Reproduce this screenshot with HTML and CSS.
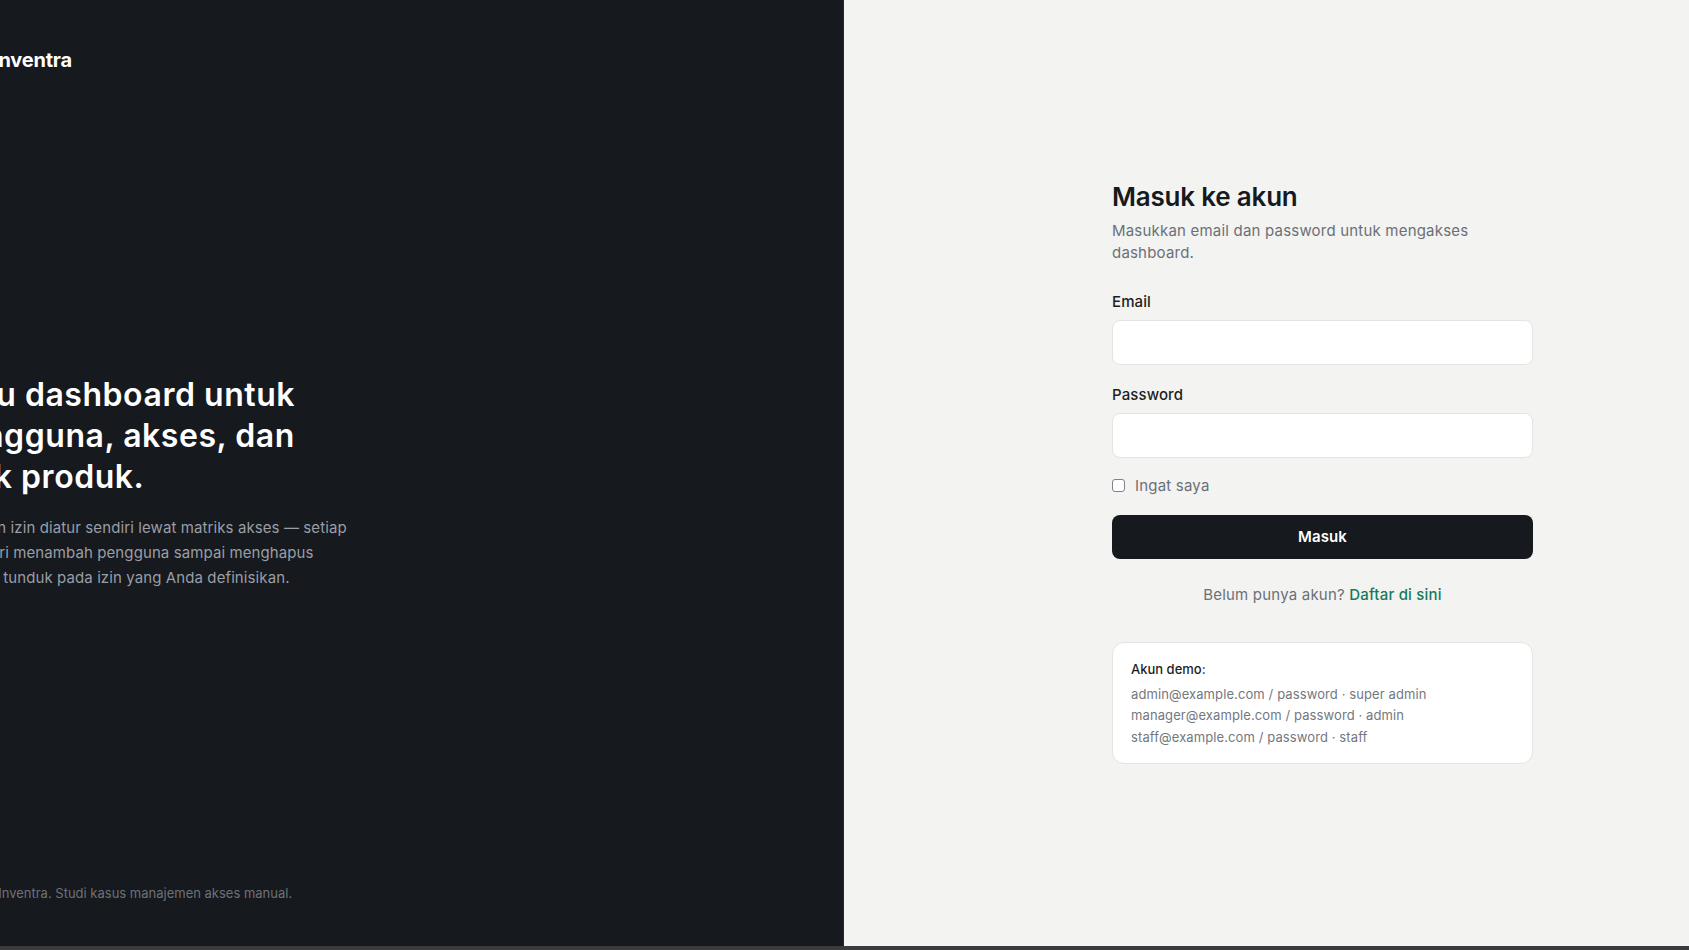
FILE: index.html
```html
<!DOCTYPE html>
<html lang="id">
<head>
<meta charset="utf-8">
<title>Masuk — Inventra</title>
<link rel="stylesheet" href="styles.css">
</head>
<body>
<div class="page">
  <aside class="brand-panel">
    <div class="brand-inner">
      <div class="logo">
        <span class="logo-mark"><svg viewBox="0 0 24 24" width="20" height="20"><rect x="4" y="4" width="16" height="16" rx="3" fill="none" stroke="#16191e" stroke-width="2.6"/></svg></span>
        <span class="logo-text">Inventra</span>
      </div>
      <div class="pitch">
        <h1 class="headline">Satu dashboard untuk<br>pengguna, akses, dan<br>stok produk.</h1>
        <p class="lead">Role dan izin diatur sendiri lewat matriks akses — setiap<br>aksi, dari menambah pengguna sampai menghapus<br>produk, tunduk pada izin yang Anda definisikan.</p>
      </div>
      <p class="copyright">© 2025 Inventra. Studi kasus manajemen akses manual.</p>
    </div>
  </aside>
  <main class="form-panel">
    <div class="form-wrap">
      <h2 class="title">Masuk ke akun</h2>
      <p class="subtitle">Masukkan email dan password untuk mengakses dashboard.</p>
      <form class="login-form">
        <div class="field">
          <label class="label" for="email">Email</label>
          <input class="input" id="email" type="email">
        </div>
        <div class="field">
          <label class="label" for="password">Password</label>
          <input class="input" id="password" type="password">
        </div>
        <label class="remember"><input class="check" type="checkbox"><span>Ingat saya</span></label>
        <button class="submit" type="button">Masuk</button>
      </form>
      <p class="register">Belum punya akun? <a class="link" href="#">Daftar di sini</a></p>
      <div class="demo">
        <p class="demo-title">Akun demo:</p>
        <p class="demo-line">admin@example.com / password · super admin</p>
        <p class="demo-line">manager@example.com / password · admin</p>
        <p class="demo-line">staff@example.com / password · staff</p>
      </div>
    </div>
  </main>
</div>
<div class="bottom-bar"></div>
</body>
</html>
```
FILE: styles.css
```css
* { box-sizing: border-box; }
html, body { margin: 0; padding: 0; }
body {
  font-family: Inter, "Liberation Sans", sans-serif;
  background: #f3f3f1;
  width: 1689px;
  height: 950px;
  overflow: hidden;
}
.page {
  display: flex;
  height: 946px;
}
.brand-panel {
  width: 844px;
  flex: none;
  background: #16191e;
  border-right: 1px solid #24272d;
  overflow: hidden;
}
.brand-inner {
  margin-left: -56px;
  height: 100%;
  display: flex;
  flex-direction: column;
  justify-content: space-between;
  padding: 42px 0 45px;
}
.logo {
  display: flex;
  align-items: center;
  gap: 13px;
}
.logo-mark {
  width: 36px;
  height: 36px;
  border-radius: 9px;
  background: #ffffff;
  display: flex;
  align-items: center;
  justify-content: center;
}
.logo-text {
  color: #ffffff;
  font-size: 20px;
  font-weight: 700;
  letter-spacing: -0.2px;
}
.pitch {
  margin: 0;
}
.headline {
  margin: 0;
  color: #ffffff;
  font-size: 32px;
  line-height: 41px;
  font-weight: 600;
  letter-spacing: 0.55px;
}
.lead {
  margin: 18px 0 0;
  color: #9a9ea6;
  font-size: 15px;
  line-height: 25px;
  letter-spacing: 0.1px;
}
.copyright {
  margin: 0 0 0 3px;
  color: #6d7178;
  font-size: 13px;
}
.form-panel {
  flex: 1;
  display: flex;
  align-items: center;
  padding-left: 268px;
  padding-top: 2px;
}
.form-wrap {
  width: 421px;
}
.title {
  margin: 0;
  font-size: 26px;
  line-height: 26px;
  font-weight: 600;
  color: #16191e;
  letter-spacing: -0.2px;
}
.subtitle {
  margin: 10px 0 0;
  font-size: 15px;
  line-height: 22.5px;
  color: #6b7078;
  letter-spacing: 0.2px;
}
.login-form {
  margin-top: 27px;
  display: flex;
  flex-direction: column;
}
.field {
  display: flex;
  flex-direction: column;
  gap: 8px;
  margin-bottom: 20px;
}
.label {
  font-size: 15px;
  line-height: 20px;
  font-weight: 500;
  color: #1c1f24;
  letter-spacing: 0.1px;
}
.input {
  height: 45px;
  border: 1px solid #e4e4e1;
  border-radius: 8px;
  background: #ffffff;
  font: inherit;
}
.remember {
  display: flex;
  align-items: center;
  gap: 10px;
  font-size: 15px;
  line-height: 20px;
  color: #6b7078;
  margin-top: -2px;
  letter-spacing: 0.2px;
}
.check {
  appearance: none;
  width: 13px;
  height: 13px;
  margin: 0;
  border: 1px solid #7e838b;
  border-radius: 3px;
  background: #ffffff;
}
.submit {
  margin-top: 19px;
  height: 44px;
  border: none;
  border-radius: 8px;
  background: #16191e;
  color: #ffffff;
  font: inherit;
  font-size: 15px;
  font-weight: 600;
  letter-spacing: 0.1px;
}
.register {
  margin: 26px 0 0;
  text-align: center;
  font-size: 15px;
  line-height: 20px;
  color: #6b7078;
  letter-spacing: 0.2px;
}
.link {
  color: #167a5e;
  font-weight: 500;
  text-decoration: none;
}
.demo {
  margin-top: 37px;
  background: #ffffff;
  border: 1px solid #e4e4e1;
  border-radius: 12px;
  padding: 17px 18px 15px;
}
.demo-title {
  margin: 0 0 6px;
  font-size: 13px;
  line-height: 18px;
  font-weight: 500;
  color: #1c1f24;
}
.demo-line {
  margin: 0;
  font-size: 13px;
  line-height: 21.5px;
  color: #737880;
  letter-spacing: 0.1px;
}
.bottom-bar {
  height: 4px;
  background: #3b3b3e;
}
```
